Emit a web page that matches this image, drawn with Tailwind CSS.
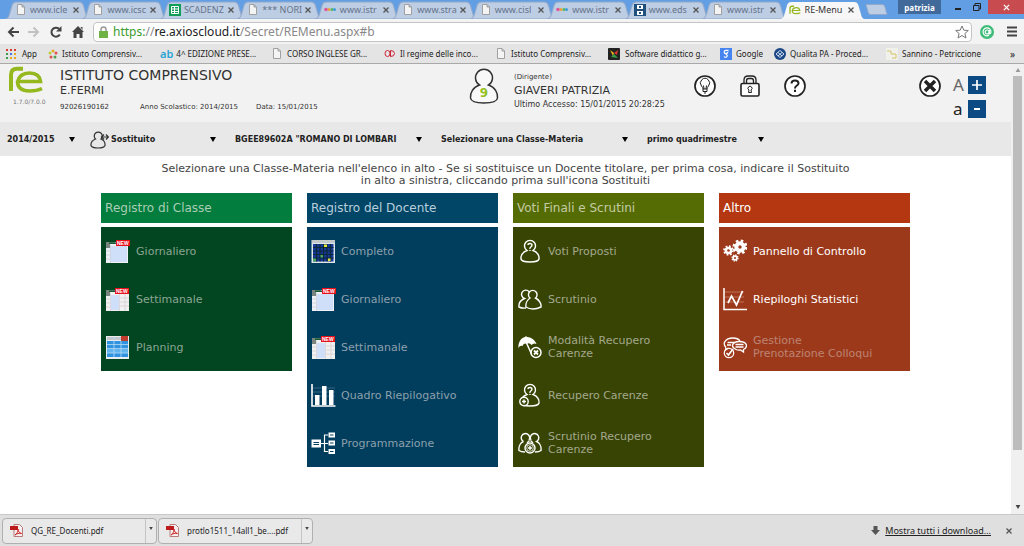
<!DOCTYPE html>
<html lang="it">
<head>
<meta charset="utf-8">
<title>RE-Menu</title>
<script src="https://cdn.jsdelivr.net/npm/@tailwindcss/browser@4"></script>
</head>
<body class="flex h-screen flex-col overflow-hidden bg-white font-['DejaVu_Sans',sans-serif] text-[#333]">

<svg class="hidden">
  <symbol id="tab" viewBox="0 0 84 18" preserveAspectRatio="none"><path d="M0 18C4 18 4 14 5 11L7 4Q8 1 11 1H73Q76 1 77 4L79 11C80 14 80 18 84 18Z"/></symbol>
  <symbol id="doc" viewBox="0 0 10 11"><path d="M1.500 .5H6L8.500 3V10.500H1.500ZM6 .5V3H8.500" fill="#f4f4f4" stroke="#a0a0a0"/></symbol>
  <symbol id="x" viewBox="0 0 8 8"><path d="M1.500 1.500 6.500 6.500M6.500 1.500 1.500 6.500" stroke="#555" stroke-width="1.300"/></symbol>
  <symbol id="dots" viewBox="0 0 12 5"><circle cx="2" cy="2.500" r="1.800" fill="#e0559a"/><circle cx="5" cy="2.500" r="1.500" fill="#e8a23a"/><circle cx="8" cy="2.500" r="1.500" fill="#5bb75b"/><circle cx="10.500" cy="2.500" r="1.500" fill="#3b9ddb"/></symbol>
  <symbol id="re" viewBox="0 0 36 28"><path d="M3 25V9Q3 2.800 9 2.800H15" fill="none" stroke="#95b81f" stroke-width="4"/><path d="M10 15.500H32.500Q31.500 7 21.500 7T9.500 16Q10 25 21.500 25Q29 25 34 22.500" fill="none" stroke="#95b81f" stroke-width="3.600"/></symbol>
  <symbol id="arrow" viewBox="0 0 6 5"><path d="M0 0H6L3 5Z"/></symbol>
  <symbol id="person" viewBox="0 0 24 24"><path d="M9 11.500A5.500 5.500 0 1 1 15 11.500C19.500 13 21.500 17 21 20C20.500 22.500 16 23 12 23S3.500 22.500 3 20C2.500 17 4.500 13 9 11.500Z"/></symbol>
  <symbol id="two" viewBox="0 0 24 24"><path d="M12 11A4.300 4.300 0 1 1 17.500 11C21.500 13 23.500 17 23 20Q19 22 15 22T8 20C7.500 17 9 13 12 11ZM11 4.500A4.300 4.300 0 1 0 6.500 11.500C3 13 .5 16 1 20Q4 21.500 8 21"/></symbol>
  <symbol id="sheet" viewBox="0 0 25 25"><path d="M1 3H23V24H1Z" fill="#eef1f5"/><path d="M1 3H10V5H5V9H1Z" fill="#7a8580"/><path d="M4 3.500H11V5H4Z" fill="#155b30"/><path d="M5.500 6V24M1 12H5M1 16H5M1 20H5" stroke="#c5ccd6" stroke-width=".7"/><path d="M6 7H22V23H6Z" fill="#cfdffa"/><path d="M11 1H25V7H11Z" fill="#e8101b"/><text x="12" y="6" font-size="5" font-weight="bold" fill="#fff" font-family="Liberation Sans">NEW</text></symbol>
  <symbol id="week" viewBox="0 0 25 25"><path d="M1 3H24V24H1Z" fill="#f0f0f0"/><path d="M1 3H10V5H5V9H1Z" fill="#7a8580"/><path d="M4 3.500H11V5H4Z" fill="#155b30"/><path d="M6 8H14V23H6Z" fill="#cfdffa"/><path d="M5.500 6V24M14.500 7V24M20 7V24M1 12H5M1 16H5M1 20H5M15 11H24M15 15H24M15 19H24" stroke="#d0c8cc" stroke-width=".6"/><path d="M10 1H24V7H10Z" fill="#e8101b"/><text x="11" y="6" font-size="5" font-weight="bold" fill="#fff" font-family="Liberation Sans">NEW</text></symbol>
  <symbol id="pdf" viewBox="0 0 13 13"><path d="M4 .5H9.500L12.500 3.500V12.500H4Z" fill="#f6eeee" stroke="#b87a7a"/><path d="M0 2H8V6H0Z" fill="#bb1b1b"/><path d="M5 11C8 9 8 6 8 5C8 8 10 9 11.500 9.500C9 9 7 9.500 5 11Z" fill="none" stroke="#c22" /></symbol>
</svg>

<!-- Tab strip -->
<div class="flex h-[19px] shrink-0 bg-[#629ee3] pl-[9px] font-['Noto_Sans',sans-serif] text-[9px] leading-[18px] text-[#66738a]">
  <div class="grid min-w-0 flex-1 grid-cols-11">
    <div class="relative flex items-center pl-[7px]"><svg class="absolute top-px -left-1 h-[18px] w-[calc(100%+8px)] fill-[#bccde4] stroke-[#90a9cc]"><use href="#tab"/></svg><svg class="relative h-[11px] w-[10px]"><use href="#doc"/></svg><span class="relative ml-1 w-[39px] whitespace-nowrap">www.icle</span><button class="relative ml-[3px]" aria-label="Chiudi"><svg class="size-2"><use href="#x"/></svg></button></div>
    <div class="relative flex items-center pl-[7px]"><svg class="absolute top-px -left-1 h-[18px] w-[calc(100%+8px)] fill-[#bccde4] stroke-[#90a9cc]"><use href="#tab"/></svg><svg class="relative h-[11px] w-[10px]"><use href="#doc"/></svg><span class="relative ml-1 w-[39px] whitespace-nowrap">www.icsc</span><button class="relative ml-[3px]" aria-label="Chiudi"><svg class="size-2"><use href="#x"/></svg></button></div>
    <div class="relative flex items-center pl-[5px]"><svg class="absolute top-px -left-1 h-[18px] w-[calc(100%+8px)] fill-[#bccde4] stroke-[#90a9cc]"><use href="#tab"/></svg><svg class="relative size-3" viewBox="0 0 12 12"><path fill="#0f9d58" d="M0 0H12V12H0Z"/><path fill="none" stroke="#fff" d="M2.500 2.500H9.500V9.500H2.500ZM2.500 5H9.500M2.500 7.500H9.500M5.500 2.500V9.500"/></svg><span class="relative ml-[3px] w-10 whitespace-nowrap">SCADENZ</span><button class="relative ml-[3px]" aria-label="Chiudi"><svg class="size-2"><use href="#x"/></svg></button></div>
    <div class="relative flex items-center pl-[7px]"><svg class="absolute top-px -left-1 h-[18px] w-[calc(100%+8px)] fill-[#bccde4] stroke-[#90a9cc]"><use href="#tab"/></svg><svg class="relative h-[11px] w-[10px]"><use href="#doc"/></svg><span class="relative ml-1 w-[39px] whitespace-nowrap">*** NORI</span><button class="relative ml-[3px]" aria-label="Chiudi"><svg class="size-2"><use href="#x"/></svg></button></div>
    <div class="relative flex items-center pl-[5px]"><svg class="absolute top-px -left-1 h-[18px] w-[calc(100%+8px)] fill-[#bccde4] stroke-[#90a9cc]"><use href="#tab"/></svg><svg class="relative h-[5px] w-3"><use href="#dots"/></svg><span class="relative ml-1 w-[39px] whitespace-nowrap">www.istr</span><button class="relative ml-[3px]" aria-label="Chiudi"><svg class="size-2"><use href="#x"/></svg></button></div>
    <div class="relative flex items-center pl-[7px]"><svg class="absolute top-px -left-1 h-[18px] w-[calc(100%+8px)] fill-[#bccde4] stroke-[#90a9cc]"><use href="#tab"/></svg><svg class="relative h-[11px] w-[10px]"><use href="#doc"/></svg><span class="relative ml-1 w-[39px] whitespace-nowrap">www.stra</span><button class="relative ml-[3px]" aria-label="Chiudi"><svg class="size-2"><use href="#x"/></svg></button></div>
    <div class="relative flex items-center pl-[7px]"><svg class="absolute top-px -left-1 h-[18px] w-[calc(100%+8px)] fill-[#bccde4] stroke-[#90a9cc]"><use href="#tab"/></svg><svg class="relative h-[11px] w-[10px]"><use href="#doc"/></svg><span class="relative ml-1 w-[39px] whitespace-nowrap">www.cisl</span><button class="relative ml-[3px]" aria-label="Chiudi"><svg class="size-2"><use href="#x"/></svg></button></div>
    <div class="relative flex items-center pl-[5px]"><svg class="absolute top-px -left-1 h-[18px] w-[calc(100%+8px)] fill-[#bccde4] stroke-[#90a9cc]"><use href="#tab"/></svg><svg class="relative h-[5px] w-3"><use href="#dots"/></svg><span class="relative ml-1 w-[39px] whitespace-nowrap">www.istr</span><button class="relative ml-[3px]" aria-label="Chiudi"><svg class="size-2"><use href="#x"/></svg></button></div>
    <div class="relative flex items-center pl-[5px]"><svg class="absolute top-px -left-1 h-[18px] w-[calc(100%+8px)] fill-[#bccde4] stroke-[#90a9cc]"><use href="#tab"/></svg><svg class="relative size-3" viewBox="0 0 12 12"><path fill="#1f4f7a" d="M0 0H12V12H0Z"/><path fill="#fff" d="M3 1H9V5H3ZM3 7H9V11H3Z"/><path fill="#1f4f7a" d="M5 2H7V4H5ZM5 8H7V10H5Z"/></svg><span class="relative ml-[3px] w-10 whitespace-nowrap">www.eds</span><button class="relative ml-[3px]" aria-label="Chiudi"><svg class="size-2"><use href="#x"/></svg></button></div>
    <div class="relative flex items-center pl-[7px]"><svg class="absolute top-px -left-1 h-[18px] w-[calc(100%+8px)] fill-[#bccde4] stroke-[#90a9cc]"><use href="#tab"/></svg><svg class="relative h-[11px] w-[10px]"><use href="#doc"/></svg><span class="relative ml-1 w-[39px] whitespace-nowrap">www.istr</span><button class="relative ml-[3px]" aria-label="Chiudi"><svg class="size-2"><use href="#x"/></svg></button></div>
    <div class="relative flex items-center pl-[5px] text-[#333]"><svg class="absolute top-px -left-1 h-[18px] w-[calc(100%+8px)] fill-[#f7f7f7]"><use href="#tab"/></svg><svg class="relative h-[10px] w-3"><use href="#re"/></svg><span class="relative ml-1 w-[39px] whitespace-nowrap">RE-Menu</span><button class="relative ml-[3px]" aria-label="Chiudi"><svg class="size-2"><use href="#x"/></svg></button></div>
  </div>
  <button class="ml-1 h-[19px] w-[23px]" aria-label="Nuova scheda"><svg class="h-[11px] w-[23px]" viewBox="0 0 23 11"><path d="M1 .5H18Q19 .5 20 3L22 10.500H5Q4 10.500 3 8Z" fill="#bccde4" stroke="#90a9cc"/></svg></button>
  <button class="ml-[10px] h-[14px] w-[43px] bg-[#41699a] text-[8px] leading-[13px] font-bold text-white">patrizia</button>
  <button class="ml-[9px] flex h-[14px] w-4 justify-center" aria-label="Riduci a icona"><span class="mt-2 h-[2px] w-[6px] bg-[#222]"></span></button>
  <button class="flex h-[14px] w-[22px] items-center justify-center" aria-label="Ripristina"><svg class="size-2" viewBox="0 0 8 8"><path d="M2 2V.5H7.500V6H6M.5 2.500H6V7.500H.5Z" fill="none" stroke="#222"/></svg></button>
  <button class="flex h-[14px] w-9 items-center justify-center bg-[#c84b4f]" aria-label="Chiudi finestra"><svg class="size-[7px]" viewBox="0 0 8 8"><path d="M1 1 7 7M7 1 1 7" stroke="#fff" stroke-width="1.500"/></svg></button>
</div>

<!-- Address bar -->
<div class="flex h-[25px] shrink-0 items-center bg-[#f3f3f3] pl-[7px]">
  <button aria-label="Indietro"><svg class="h-3 w-3" viewBox="0 0 12 12"><path d="M12 6H2M6.500 1.500 2 6 6.500 10.500" fill="none" stroke="#444" stroke-width="2"/></svg></button>
  <button class="ml-[9px]" aria-label="Avanti"><svg class="h-3 w-3" viewBox="0 0 12 12"><path d="M0 6H10M5.500 1.500 10 6 5.500 10.500" fill="none" stroke="#c2c2c2" stroke-width="2"/></svg></button>
  <button class="ml-[10px]" aria-label="Ricarica"><svg class="size-3" viewBox="0 0 12 12"><path d="M9.800 8.500A4.500 4.500 0 1 1 9 2.800" fill="none" stroke="#444" stroke-width="2"/><path d="M11.500 0V5.500H6Z" fill="#444"/></svg></button>
  <button class="ml-[10px]" aria-label="Pagina iniziale"><svg class="h-3 w-3" viewBox="0 0 12 12"><path d="M6 0 12 6H10.500V12H7.500V8H4.500V12H1.500V6H0ZM8.500 1H10.500V4Z" fill="#444"/></svg></button>
  <div class="ml-[9px] flex h-5 min-w-0 flex-1 items-center rounded-sm border border-[#c4c4c4] bg-white pl-[5px]">
    <svg class="h-3 w-[9px]" viewBox="0 0 9 12"><path d="M2 6V3.500Q2 1 4.500 1T7 3.500V6" fill="none" stroke="#999" stroke-width="1.500"/><path d="M0 5H9V12H0Z" fill="#6fb344"/></svg>
    <div class="ml-[5px] flex-1 font-['Noto_Sans',sans-serif] text-[12px] leading-[18px] text-[#888]"><span class="text-[#3a9a2c]">https:</span>//<span class="text-[#222]">re.axioscloud.it</span>/Secret/REMenu.aspx#b</div>
    <button class="mr-[2px]" aria-label="Preferiti"><svg class="size-[14px]" viewBox="0 0 14 14"><path d="M7 1 8.800 5.200 13.300 5.500 9.900 8.500 11 13 7 10.500 3 13 4.100 8.500 .7 5.500 5.200 5.200Z" fill="#fff" stroke="#777"/></svg></button>
  </div>
  <button class="ml-2" aria-label="Estensione"><svg class="size-[14px]" viewBox="0 0 14 14"><circle cx="7" cy="7" r="7" fill="#3dbb78"/><path d="M9 10.300A4 4 0 1 1 11 7Q11 8.800 9.300 8.800V5" fill="none" stroke="#fff" stroke-width="1.200"/><circle cx="7.200" cy="7" r="2" fill="none" stroke="#fff" stroke-width="1.200"/></svg></button>
  <button class="mr-[7px] ml-[13px]" aria-label="Menu"><svg class="h-[11px] w-[10px]" viewBox="0 0 10 11"><path d="M0 1.500H10M0 5.500H10M0 9.500H10" stroke="#444" stroke-width="2"/></svg></button>
</div>

<!-- Bookmarks -->
<nav class="flex h-5 shrink-0 items-center border-b border-[#a9a9a9] bg-[#e4e4e4] pl-[6px] font-['Noto_Sans',sans-serif] text-[8px] leading-4 whitespace-nowrap text-[#222]">
  <a href="#" class="flex w-[42px] items-center gap-[6px]"><svg class="size-[10px]" viewBox="0 0 10 10"><path d="M0 0H2V2H0ZM4 0H6V2H4ZM8 0H10V2H8Z" fill="#dc3b2c"/><path d="M0 4H2V6H0Z" fill="#3b9e4b"/><path d="M4 4H6V6H4Z" fill="#3f78d8"/><path d="M8 4H10V6H8Z" fill="#e8a81c"/><path d="M0 8H2V10H0Z" fill="#3b9e4b"/><path d="M4 8H6V10H4ZM8 8H10V10H8Z" fill="#e8a81c"/></svg>App</a>
  <a href="#" class="flex w-[112px] items-center gap-1"><svg class="size-[10px]" viewBox="0 0 10 10"><circle cx="5" cy="2" r="1.500" fill="#e8a81c"/><circle cx="2" cy="4" r="1.500" fill="#b8cf3a"/><circle cx="8" cy="4" r="1.500" fill="#e05050"/><circle cx="3" cy="8" r="1.500" fill="#e05050"/><circle cx="7" cy="8" r="1.500" fill="#4aa34a"/></svg>Istituto Comprensiv...</a>
  <a href="#" class="flex w-[112px] items-center gap-[3px]"><span class="text-[11px] font-semibold text-[#2ba3d4]">ab</span>4^ EDIZIONE PRESE...</a>
  <a href="#" class="flex w-[112px] items-center gap-[5px]"><svg class="h-[11px] w-[10px]"><use href="#doc"/></svg>CORSO INGLESE GR...</a>
  <a href="#" class="flex w-[112px] items-center gap-[5px]"><svg class="h-[10px] w-[11px]" viewBox="0 0 11 10"><path d="M3.500 1.500A2.500 3 0 1 0 3.500 7.500 2.500 3 0 1 0 3.500 1.500M6.500 1.500V7.500Q10.500 7.500 10.500 4.500T6.500 1.500" fill="none" stroke="#cf2034"/></svg>Il regime delle inco...</a>
  <a href="#" class="flex w-[112px] items-center gap-[5px]"><svg class="h-[11px] w-[10px]"><use href="#doc"/></svg>Istituto Comprensiv...</a>
  <a href="#" class="flex w-[112px] items-center gap-[5px]"><svg class="size-3" viewBox="0 0 12 12"><rect width="12" height="12" rx="1" fill="#222"/><path d="M2 2 6 5 5 8Z" fill="#e8b21c"/><path d="M6 5 10 2 9 7Z" fill="#d8372c"/><path d="M3 9 6 6 10 10Z" fill="#38a04a"/></svg>Software didattico g...</a>
  <a href="#" class="flex w-[54px] items-center gap-1"><svg class="size-3" viewBox="0 0 12 12"><path d="M0 0H12V12H0Z" fill="#4684f0"/><path d="M8.500 2.300H6A1.700 1.700 0 1 0 7.500 4.500Q5 6 7 7A1.700 1.500 0 1 1 4 8.500" fill="none" stroke="#fff" stroke-width="1.200"/></svg>Google</a>
  <a href="#" class="flex w-[112px] items-center gap-1"><svg class="size-3" viewBox="0 0 12 12"><circle cx="6" cy="6" r="6" fill="#1d4886"/><path d="M2 6 6 2.500 10 6 6 9.500ZM4 4.500 8 8M4 8 8 4.500" fill="none" stroke="#cfe0f4"/></svg>Qualita PA - Proced...</a>
  <a href="#" class="flex flex-1 items-center gap-1"><svg class="size-3" viewBox="0 0 12 12"><path d="M0 0H12V12H0Z" fill="#f1f1ec"/><path d="M1 3H5V6H10V10H6" fill="none" stroke="#d6c46a"/></svg>Sannino - Petriccione</a>
  <button class="mr-[9px] text-[10px]" aria-label="Altri preferiti">»</button>
</nav>

<div class="flex min-h-0 flex-1">
  <main class="min-w-0 flex-1 overflow-hidden">
    <!-- School and user header -->
    <header class="flex h-[58px] bg-[#f2f2f2]">
      <div class="w-[60px] pt-[2px] pl-2"><svg class="h-[28px] w-9"><use href="#re"/></svg><p class="pl-[5px] text-[6px] leading-4 text-[#777]">1.7.0/7.0.0</p></div>
      <div class="w-[409px]">
        <h1 class="pt-[3px] text-[14px] leading-4">ISTITUTO COMPRENSIVO</h1>
        <p class="text-[11px] leading-4">E.FERMI</p>
        <p class="flex text-[7px] leading-4"><span class="w-20">92026190162</span><span class="w-[116px]">Anno Scolastico: 2014/2015</span><span>Data: 15/01/2015</span></p>
      </div>
      <svg class="mt-1 h-9 w-[30px]" viewBox="0 0 30 36"><path d="M10.500 17A8.500 8.500 0 1 1 19.500 17C26 19 29 25 28.500 30C28 34 21 35 15 35S2 34 1.500 30C1 25 4 19 10.500 17Z" fill="#f8f8f8" stroke="#333" stroke-width="1.500"/><text x="15" y="29" text-anchor="middle" font-size="12" font-weight="bold" fill="#95c11f" font-family="DejaVu Sans">9</text></svg>
      <div class="ml-[15px] flex-1">
        <p class="pt-[5px] text-[7px] leading-4">(Dirigente)</p>
        <p class="text-[11px] leading-3">GIAVERI PATRIZIA</p>
        <p class="text-[8px] leading-4">Ultimo Accesso: 15/01/2015 20:28:25</p>
      </div>
      <div class="flex w-[225px] gap-[23px] pt-[11px]">
        <button class="size-[22px]" aria-label="Suggerimenti"><svg class="size-[22px]" viewBox="0 0 22 22" fill="none" stroke="#222"><circle cx="11" cy="11" r="10" fill="#fff" stroke-width="1.700"/><path d="M9 14Q9 12.500 7.500 11A4.600 4.600 0 1 1 14.500 11Q13 12.500 13 14ZM9 14V16.500H13V14M10 18H12M10 14 9.500 10.500M12 14 12.500 10.500"/></svg></button>
        <button class="size-[22px]" aria-label="Password"><svg class="size-[22px]" viewBox="0 0 22 22" fill="none" stroke="#222" stroke-width="1.300"><path d="M5 9V5Q5 1 9 1H13Q17 1 17 5V9M7.500 9V6Q7.500 3.500 9.500 3.500H12.500Q14.500 3.500 14.500 6V9"/><rect x="2" y="8.500" width="18" height="12.500" rx="1.500" fill="#fff" stroke-width="1.600"/><path d="M10 15A2 2 0 1 1 12 15L12.500 17.500H9.500Z" stroke-width="1"/></svg></button>
        <button class="size-[22px]" aria-label="Aiuto"><svg class="size-[22px]" viewBox="0 0 22 22"><circle cx="11" cy="11" r="10" fill="#fff" stroke="#222" stroke-width="1.700"/><path d="M7.500 8.500Q7.500 5.500 11 5.500T14.500 8.300Q14.500 10 12.500 10.800Q11 11.500 11 13.500M11 14.800V17" fill="none" stroke="#222" stroke-width="2"/></svg></button>
      </div>
      <button class="mt-[11px] size-[22px] shrink-0" aria-label="Esci"><svg class="size-[22px]" viewBox="0 0 22 22"><circle cx="11" cy="11" r="10" fill="#fff" stroke="#222" stroke-width="1.700"/><path d="M6 6 16 16M16 6 6 16" stroke="#222" stroke-width="3.500"/></svg></button>
      <div class="mr-[25px] ml-3 grid grid-cols-[15px_18px] content-start gap-y-[6px] pt-3 font-['Noto_Sans',sans-serif] text-[17px] leading-[18px]">
        <span class="text-[#666]">A</span><button class="flex size-[18px] items-center justify-center bg-[#0b4a83]" aria-label="Ingrandisci testo"><svg class="size-[10px]" viewBox="0 0 10 10"><path d="M0 5H10M5 0V10" stroke="#fff" stroke-width="1.700"/></svg></button>
        <span class="text-[#222]">a</span><button class="flex size-[18px] items-center justify-center bg-[#0b4a83]" aria-label="Riduci testo"><span class="h-[2px] w-[6px] bg-white"></span></button>
      </div>
    </header>

    <!-- Filters -->
    <form class="flex h-[34px] items-center gap-[19px] bg-[#e8e8e8] pt-px pl-[7px] text-[8px] font-bold text-[#222]">
      <div class="relative w-[68px]"><select aria-label="Anno scolastico" class="block w-full appearance-none pr-[11px] leading-4"><option>2014/2015</option></select><svg class="pointer-events-none absolute top-[5px] right-0 h-[5px] w-[6px]"><use href="#arrow"/></svg></div>
      <div class="-ml-1 flex items-center gap-[2px]"><svg class="size-[19px]" viewBox="0 0 19 19" fill="none" stroke="#333" stroke-width="1.200"><path d="M5.500 9A4 4 0 1 1 11 9Q15.500 11 15 15.500Q14 18 8 18T1 15.500Q.5 11 5.500 9Z"/><path d="M11.500 7H18M16 4.500 18.300 7 16 9.500M14 4.500 11.500 7 14 9.500"/></svg>
      <div class="relative w-[105px]"><select aria-label="Sostituito" class="block w-full appearance-none pr-[11px] leading-4"><option>Sostituito</option></select><svg class="pointer-events-none absolute top-[5px] right-0 h-[5px] w-[6px]"><use href="#arrow"/></svg></div></div>
      <div class="relative w-[187px]"><select aria-label="Plesso" class="block w-full appearance-none pr-[11px] leading-4"><option>BGEE89602A "ROMANO DI LOMBARI</option></select><svg class="pointer-events-none absolute top-[5px] right-0 h-[5px] w-[6px]"><use href="#arrow"/></svg></div>
      <div class="relative w-[187px]"><select aria-label="Classe-Materia" class="block w-full appearance-none pr-[11px] leading-4"><option>Selezionare una Classe-Materia</option></select><svg class="pointer-events-none absolute top-[5px] right-0 h-[5px] w-[6px]"><use href="#arrow"/></svg></div>
      <div class="relative w-[117px]"><select aria-label="Periodo" class="block w-full appearance-none pr-[11px] leading-4"><option>primo quadrimestre</option></select><svg class="pointer-events-none absolute top-[5px] right-0 h-[5px] w-[6px]"><use href="#arrow"/></svg></div>
    </form>

    <p class="pt-[7px] pb-[6px] text-center text-[11px] leading-3 text-[#444]">Selezionare una Classe-Materia nell'elenco in alto - Se si sostituisce un Docente titolare, per prima cosa, indicare il Sostituito<br>in alto a sinistra, cliccando prima sull'icona Sostituiti</p>

    <!-- Menu columns -->
    <div class="mx-[10%] grid grid-cols-4 items-start gap-[15px] text-[11px] leading-[13px]">
      <section>
        <h2 class="mb-1 bg-[#037d3e] px-1 text-[12px] leading-[30px] text-[#a9cdb5]">Registro di Classe</h2>
        <ul class="bg-[#024521] px-1 text-[#8aa593]">
          <li><a href="#" class="flex h-12 items-center gap-[6px]"><svg class="size-[25px] shrink-0"><use href="#sheet"/></svg>Giornaliero</a></li>
          <li><a href="#" class="flex h-12 items-center gap-[6px]"><svg class="size-[25px] shrink-0"><use href="#week"/></svg>Settimanale</a></li>
          <li><a href="#" class="flex h-12 items-center gap-[6px]"><svg class="size-[25px] shrink-0" viewBox="0 0 25 25"><path d="M1 1H24V24H1Z" fill="#e9edf0"/><path d="M2 2H16V5H2Z" fill="#c3c8cc"/><path d="M16 1H23V6H16Z" fill="#c03c2d"/><path d="M2 6H23V22H2Z" fill="#2f93e0"/><path d="M2 14H23V18H2Z" fill="#62b4ee"/><path d="M9 2V22M16 6V22M2 9.500H23M2 13.500H23M2 18H23" stroke="#b7dcf5" stroke-width=".8"/></svg>Planning</a></li>
        </ul>
      </section>
      <section>
        <h2 class="mb-1 bg-[#014667] px-1 text-[12px] leading-[30px] text-[#b9cfdb]">Registro del Docente</h2>
        <ul class="bg-[#013d5c] px-1 text-[#8ba0ad]">
          <li><a href="#" class="flex h-12 items-center gap-[5px]"><svg class="size-[25px] shrink-0" viewBox="0 0 25 25"><path d="M.5 1H24V24H.5Z" fill="#dfe5e8"/><path d="M1 1H24V4H1Z" fill="#c3c8ca"/><path d="M2 5H22.500V22.500H2Z" fill="#17389a"/><path d="M5.500 5V22.500M9 5V22.500M12.500 5V22.500M16 5V22.500M19.500 5V22.500M2 8.500H22.500M2 12H22.500M2 15.500H22.500M2 19H22.500" stroke="#0b2a35" stroke-width="1.200"/><path d="M13 5.500H16V8H13ZM17 19.500H19.500V22H17Z" fill="#e6e63a"/><path d="M9.500 16H12V18.500H9.500ZM2 19.500H5V22.500H2Z" fill="#4aa860"/></svg>Completo</a></li>
          <li><a href="#" class="flex h-12 items-center gap-[5px]"><svg class="size-[25px] shrink-0"><use href="#sheet"/></svg>Giornaliero</a></li>
          <li><a href="#" class="flex h-12 items-center gap-[5px]"><svg class="size-[25px] shrink-0"><use href="#week"/></svg>Settimanale</a></li>
          <li><a href="#" class="flex h-12 items-center gap-[5px]"><svg class="size-[25px] shrink-0" viewBox="0 0 25 25"><path d="M1 5H24M1 9H24M1 13H24" stroke="#4f7a90" stroke-width=".7"/><path d="M1 1V23H24.500" fill="none" stroke="#fff" stroke-width="1.600"/><path d="M4 12H8.500V22H4ZM11 3H15.500V22H11ZM18 7H22.500V22H18Z" fill="#fff"/></svg>Quadro Riepilogativo</a></li>
          <li><a href="#" class="flex h-12 items-center gap-[5px]"><svg class="size-[25px] shrink-0" viewBox="0 0 25 25"><path d="M.5 8.500H10V16.500H.5ZM17.500 1.500H24V6.500H17.500ZM17.500 9.500H24V14.500H17.500ZM17.500 18H24V23H17.500Z" fill="#fff"/><path d="M2.500 11.500H8M2.500 13.500H8M19 4H22.500M19 12H22.500M19 20.500H22.500" stroke="#013d5c"/><path d="M10 12.500H17M17 4H13.500V20.500H17" fill="none" stroke="#fff" stroke-width="1.200"/></svg>Programmazione</a></li>
        </ul>
      </section>
      <section>
        <h2 class="mb-1 bg-[#556b04] px-1 text-[12px] leading-[30px] text-[#c3cca5]">Voti Finali e Scrutini</h2>
        <ul class="bg-[#384404] pr-8 pl-[5px] text-[#a3a88d]">
          <li><a href="#" class="flex h-12 items-center gap-[6px]"><svg class="size-6 shrink-0" viewBox="0 0 24 24" fill="none" stroke="#fff" stroke-width="1.400"><use href="#person"/><path d="M10 6Q10 4.500 12 4.500T14 6.300Q14 7.300 12.800 8T12 10M12 11V12"/></svg>Voti Proposti</a></li>
          <li><a href="#" class="flex h-12 items-center gap-[6px]"><svg class="size-6 shrink-0 fill-none stroke-white stroke-[1.4]"><use href="#two"/></svg>Scrutinio</a></li>
          <li><a href="#" class="flex h-12 items-center gap-[6px]"><svg class="size-6 shrink-0" viewBox="0 0 24 24"><path d="M.5 13C0 7 3 3 7 2L8 1 9 2C13 2 17 5 18.500 9Q15.500 7.500 13.500 10Q11.500 7 8.500 9Q6 7.500 4.500 11Q2 10 .5 13Z" fill="#fff"/><path d="M8.500 8 13.500 19" stroke="#fff" stroke-width="1.500"/><circle cx="18" cy="17.500" r="5" fill="none" stroke="#fff" stroke-width="1.500"/><path d="M16 15.500 20 19.500M20 15.500 16 19.500" stroke="#fff" stroke-width="1.800"/></svg>Modalità Recupero Carenze</a></li>
          <li><a href="#" class="flex h-12 items-center gap-[6px]"><svg class="size-6 shrink-0" viewBox="0 0 24 24" fill="none" stroke="#fff" stroke-width="1.400"><use href="#person"/><path d="M10 6Q10 4.500 12 4.500T14 6.300Q14 7.300 12.800 8T12 10M12 11V12"/><circle cx="6" cy="18.500" r="4.200" fill="#384404"/><path d="M4 18.500H8M6 16.500V20.500"/></svg>Recupero Carenze</a></li>
          <li><a href="#" class="flex h-12 items-center gap-[6px]"><svg class="size-6 shrink-0" viewBox="0 0 24 24" fill="none" stroke="#fff" stroke-width="1.400"><path d="M5.500 10.500A4.200 4.200 0 1 1 11 9M13 9A4.200 4.200 0 1 1 18.500 10.500C22 12 23.500 16 23 19.500Q21 21 17 21M5.500 10.500C2 12 .5 16 1 19.500Q3 21 7 21M9 12 11.500 9.500M15 12 12.500 9.500"/><circle cx="12" cy="17" r="5" fill="#384404"/><circle cx="12" cy="17" r="3.300" stroke-width=".8"/><path d="M10 17H14M12 15V19"/></svg>Scrutinio Recupero Carenze</a></li>
        </ul>
      </section>
      <section>
        <h2 class="mb-1 bg-[#b43712] px-1 text-[12px] leading-[30px] text-white">Altro</h2>
        <ul class="bg-[#9d391b] px-1 text-white">
          <li><a href="#" class="flex h-12 items-center gap-[6px]"><svg class="size-6 shrink-0" viewBox="0 0 24 24" fill="none" stroke="#fff"><circle cx="17" cy="8" r="3.700" stroke-width="4"/><circle cx="17" cy="8" r="6.300" stroke-width="2.500" stroke-dasharray="2.500 2.450"/><circle cx="5.500" cy="11.500" r="2.600" stroke-width="2.500"/><circle cx="5.500" cy="11.500" r="4.400" stroke-width="1.800" stroke-dasharray="1.750 1.700"/><circle cx="12" cy="19" r="1.900" stroke-width="1.700"/><circle cx="12" cy="19" r="3" stroke-width="1.300" stroke-dasharray="1.300 1.050"/></svg>Pannello di Controllo</a></li>
          <li><a href="#" class="flex h-12 items-center gap-[6px]"><svg class="size-6 shrink-0" viewBox="0 0 24 24"><path d="M1 5H21M1 10H21M1 15H21" stroke="#c47d67" stroke-width=".8"/><path d="M1 1V22.500H24" fill="none" stroke="#fff" stroke-width="1.500"/><path d="M5 16 8.500 9 13.500 18 19.500 4" fill="none" stroke="#fff" stroke-width="1.700"/></svg>Riepiloghi Statistici</a></li>
          <li><a href="#" class="flex h-12 items-center gap-[6px] text-[#bb8473]"><svg class="size-6 shrink-0" viewBox="0 0 24 24" fill="none" stroke="#fff" stroke-width="1.300"><path d="M3 12.500Q0 9 2 6.500Q4 3 10 3Q15 3 17 6M3 12.500 2.500 15 5.500 13"/><path d="M13 14.500Q9 12.500 9.500 10Q11 6.500 16 6.500Q23 6.500 23.500 10.500Q23.500 13 20.500 14.500V17L17.500 15Q15 15.500 13 14.500ZM4.500 7.500H12M4 10H8M12.500 9.500H20.500M12.500 12H20.500"/><circle cx="6" cy="18" r="4.700"/><path d="M3.500 18 5.500 20 10 14" stroke-width="1.700"/></svg><span>Gestione<br>Prenotazione Colloqui</span></a></li>
        </ul>
      </section>
    </div>
  </main>
  <!-- Scrollbar -->
  <div class="flex w-[13px] shrink-0 flex-col items-center bg-[#f0f0f0]" aria-hidden="true">
    <svg class="my-1 h-1 w-[6px] shrink-0 rotate-180 fill-[#999]"><use href="#arrow"/></svg>
    <div class="h-[83%] w-[9px] bg-[#bcbcbc]"></div>
    <svg class="mt-auto mb-[5px] h-1 w-[6px] shrink-0 fill-[#444]"><use href="#arrow"/></svg>
  </div>
</div>

<!-- Downloads -->
<footer class="flex h-8 shrink-0 items-center border-t border-[#c9c9c9] bg-[#dfdfdf] pl-[2px] font-['Noto_Sans',sans-serif] text-[8px] text-[#222]">
  <div class="flex h-[26px] w-[155px] rounded-sm border border-[#b0b0b0] bg-[#e9e9e9]"><button class="flex flex-1 items-center gap-2 pl-[7px]"><svg class="size-[13px]"><use href="#pdf"/></svg>QG_RE_Docenti.pdf</button><button class="flex w-[11px] justify-center border-l border-[#c4c4c4] pt-2" aria-label="Opzioni"><svg class="h-[3px] w-1 fill-[#444]"><use href="#arrow"/></svg></button></div>
  <div class="ml-px flex h-[26px] w-[155px] rounded-sm border border-[#b0b0b0] bg-[#e9e9e9]"><button class="flex flex-1 items-center gap-2 pl-[7px]"><svg class="size-[13px]"><use href="#pdf"/></svg>protlo1511_14all1_be....pdf</button><button class="flex w-[11px] justify-center border-l border-[#c4c4c4] pt-2" aria-label="Opzioni"><svg class="h-[3px] w-1 fill-[#444]"><use href="#arrow"/></svg></button></div>
  <svg class="ml-auto size-[9px]" viewBox="0 0 9 9"><path d="M2.500 0H6.500V4H9L4.500 9 0 4H2.500Z" fill="#555"/></svg>
  <a href="#" class="ml-[5px] text-[9px] underline">Mostra tutti i download...</a>
  <button class="mr-[11px] ml-[14px]" aria-label="Chiudi barra download"><svg class="size-2"><use href="#x"/></svg></button>
</footer>
</body>
</html>
